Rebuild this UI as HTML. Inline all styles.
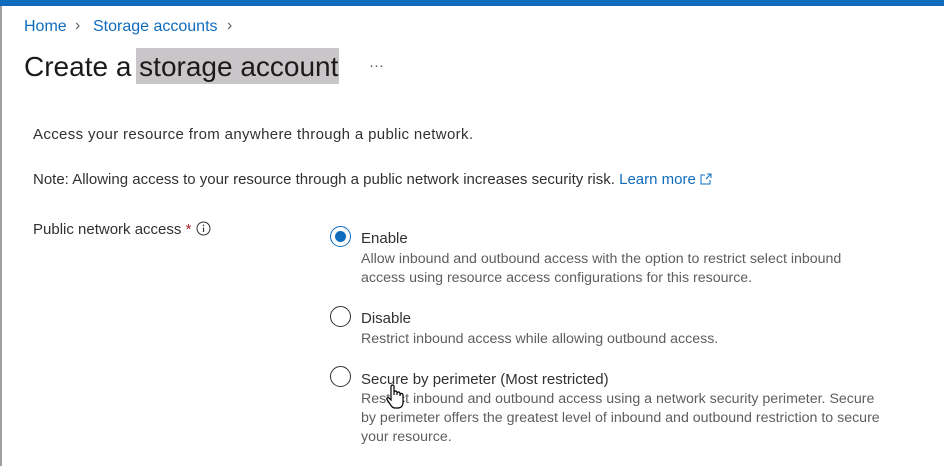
<!DOCTYPE html>
<html><head><meta charset="utf-8"><style>
*{margin:0;padding:0;box-sizing:border-box}
body{width:944px;height:466px;overflow:hidden;background:#fff;font-family:"Liberation Sans",sans-serif;color:#323130;position:relative}
.a{position:absolute;white-space:nowrap;line-height:1}
.top{position:absolute;left:0;top:0;width:944px;height:6px;background:#0f6cbd}
.lb{position:absolute;left:0;top:6px;width:2px;height:460px;background:#a19f9d}
.bc{font-size:16px;color:#0f6cbd}
.chev{font-size:16px;color:#605e5c}
.t{font-size:15px;color:#323130}
.d{font-size:14.2px;color:#605e5c}
.r{position:absolute;width:21px;height:21px;border:1.5px solid #323130;border-radius:50%}
.r.on{border-color:#0f6cbd}
.r.on::after{content:"";position:absolute;left:3.5px;top:3.5px;width:11px;height:11px;border-radius:50%;background:#0f6cbd}
</style></head><body>
<div class="top"></div><div class="lb"></div>
<div class="a bc" style="left:24px;top:19px">Home</div>
<div class="a chev" style="left:75px;top:18px">&#8250;</div>
<div class="a bc" style="left:93px;top:19px">Storage accounts</div>
<div class="a chev" style="left:227px;top:18px">&#8250;</div>
<div style="position:absolute;left:136px;top:48px;width:203px;height:36px;background:#c8c6c8"></div>
<div class="a" style="left:24px;top:53px;font-size:28px;color:#1b1a19">Create a storage account</div>
<div class="a" style="left:369px;top:58px;font-size:15px;color:#605e5c">···</div>
<div class="a t" style="left:33px;top:127px;letter-spacing:0.35px">Access your resource from anywhere through a public network.</div>
<div class="a t" style="left:33px;top:172px">Note: Allowing access to your resource through a public network increases security risk. <span style="color:#0f6cbd">Learn more</span> <svg width="12" height="12" viewBox="0 0 12 12" style="vertical-align:-1px"><path d="M7 1h4v4M11 1L6 6M5 2H1v9h9V7" fill="none" stroke="#0f6cbd" stroke-width="1"/></svg></div>
<div class="a t" style="left:33px;top:221px">Public network access <span style="color:#a4262c">*</span> <svg width="15" height="15" viewBox="0 0 15 15" style="vertical-align:-2px"><circle cx="7.5" cy="7.5" r="6.5" fill="none" stroke="#323130" stroke-width="1"/><path d="M7.5 6.5v4.5" stroke="#323130" stroke-width="1.2"/><circle cx="7.5" cy="4.3" r=".8" fill="#323130"/></svg></div>
<div class="r on" style="left:330px;top:226px"></div>
<div class="a t" style="left:361px;top:231px">Enable</div>
<div class="a d" style="left:361px;top:252px">Allow inbound and outbound access with the option to restrict select inbound</div>
<div class="a d" style="left:361px;top:271px">access using resource access configurations for this resource.</div>
<div class="r" style="left:330px;top:306px"></div>
<div class="a t" style="left:361px;top:311px">Disable</div>
<div class="a d" style="left:361px;top:332px">Restrict inbound access while allowing outbound access.</div>
<div class="r" style="left:330px;top:366px"></div>
<div class="a t" style="left:361px;top:372px">Secure by perimeter (Most restricted)</div>
<div class="a d" style="left:361px;top:392px">Restrict inbound and outbound access using a network security perimeter. Secure</div>
<div class="a d" style="left:361px;top:411px">by perimeter offers the greatest level of inbound and outbound restriction to secure</div>
<div class="a d" style="left:361px;top:430px">your resource.</div>
<svg style="position:absolute;left:385px;top:383px" width="22" height="28" viewBox="0 0 22 28"><path d="M6 14V3.5a1.5 1.5 0 0 1 3 0V12V9.5a1.5 1.5 0 0 1 3 0V12v-1.5a1.5 1.5 0 0 1 3 0V13v-1a1.5 1.5 0 0 1 3 0v7c0 4-2 6-5 6h-3c-2 0-3-1-4-2.5L2 16.5c-.8-1.2.8-2.5 1.8-1.5L6 17z" fill="#fff" stroke="#000" stroke-width="1.2"/></svg>
</body></html>
